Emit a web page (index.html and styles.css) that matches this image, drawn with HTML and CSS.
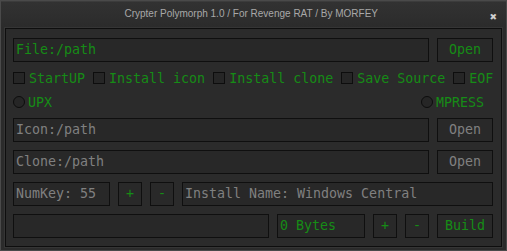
FILE: index.html
```html
<!DOCTYPE html>
<html lang="en">
<head>
  <meta charset="UTF-8" />
  <title>Crypter Polymorph</title>
  <link rel="stylesheet" href="styles.css">
</head>
<body>
  <div class="window">
    <div class="titlebar">
      <div class="title">Crypter Polymorph 1.0 / For Revenge RAT / By MORFEY</div>
      <div class="close">&#x2716;</div>
    </div>

    <div class="panel">
      <div class="row">
        <div class="field green grow">File:/path</div>
        <button class="btn green open">Open</button>
      </div>

      <div class="checks">
        <label class="check"><span class="box"></span>StartUP</label>
        <label class="check"><span class="box"></span>Install icon</label>
        <label class="check"><span class="box"></span>Install clone</label>
        <label class="check"><span class="box"></span>Save Source</label>
        <label class="check"><span class="box"></span>EOF</label>
      </div>

      <div class="radios">
        <label class="radio"><span class="dot"></span>UPX</label>
        <label class="radio mpress"><span class="dot"></span>MPRESS</label>
      </div>

      <div class="row">
        <div class="field grow">Icon:/path</div>
        <button class="btn open">Open</button>
      </div>

      <div class="row">
        <div class="field grow">Clone:/path</div>
        <button class="btn open">Open</button>
      </div>

      <div class="row">
        <div class="field numkey">NumKey: 55</div>
        <button class="btn green small">+</button>
        <button class="btn green small">-</button>
        <div class="field grow">Install Name: Windows Central</div>
      </div>

      <div class="row">
        <div class="field grow"></div>
        <div class="field green bytes">0 Bytes</div>
        <button class="btn green small">+</button>
        <button class="btn green small">-</button>
        <button class="btn green open">Build</button>
      </div>
    </div>
  </div>
</body>
</html>
```

FILE: styles.css
```css
* {
  margin: 0;
  padding: 0;
  box-sizing: border-box;
}

body {
  background-color: #2a2a2a;
  font-family: "DejaVu Sans Mono", "Liberation Mono", monospace;
}

.window {
  width: 507px;
  height: 251px;
  border: 1px solid #4a4a4a;
  background: #2b2b2b;
  display: flex;
  flex-direction: column;
}

.titlebar {
  height: 27px;
  display: flex;
  align-items: center;
  padding: 0 9px 0 12px;
  background: linear-gradient(#323232, #2b2b2b);
  border-top: 1px solid #3c3c3c;
}

.title {
  flex: 1;
  text-align: center;
  font-family: "Liberation Sans", Arial, sans-serif;
  font-size: 10px;
  color: #a8a8a8;
  margin-top: -3px;
}

.close {
  font-family: "DejaVu Sans", sans-serif;
  font-size: 9px;
  color: #cfcfcf;
  margin-top: 3px;
}

.panel {
  flex: 1;
  margin: 0 4px 3px;
  border: 1px solid #0e0e0e;
  box-shadow: 0 0 0 1px #353535;
  padding: 9px 8px 8px 7px;
  display: flex;
  flex-direction: column;
  gap: 8px;
}

.row {
  display: flex;
  gap: 8px;
  height: 24px;
}

.field {
  height: 24px;
  border: 1px solid #0f0f0f;
  background: #282828;
  color: #808080;
  font-size: 13.3px;
  line-height: 22px;
  padding-left: 2px;
  white-space: nowrap;
  overflow: hidden;
}

.grow {
  flex: 1;
}

.numkey {
  width: 97px;
}

.bytes {
  width: 88px;
}

.btn {
  height: 24px;
  border: 1px solid #0f0f0f;
  background: #292929;
  color: #808080;
  font-family: inherit;
  font-size: 13.3px;
  line-height: 22px;
}

.open {
  width: 56px;
}

.small {
  width: 24px;
}

.green {
  color: #168c16;
}

.checks {
  height: 16px;
  display: flex;
  gap: 8px;
  align-items: center;
}

.check, .radio {
  display: flex;
  align-items: center;
  gap: 4px;
  font-size: 13.3px;
  color: #168c16;
  white-space: nowrap;
}

.box {
  width: 12px;
  height: 12px;
  border: 1px solid #0d0d0d;
  background: #262626;
}

.radios {
  height: 16px;
  display: flex;
  justify-content: space-between;
  align-items: center;
}

.radio {
  gap: 3px;
}

.mpress {
  margin-right: 9px;
}

.dot {
  width: 12px;
  height: 12px;
  border-radius: 50%;
  border: 1px solid #0d0d0d;
  background: #262626;
}
```
